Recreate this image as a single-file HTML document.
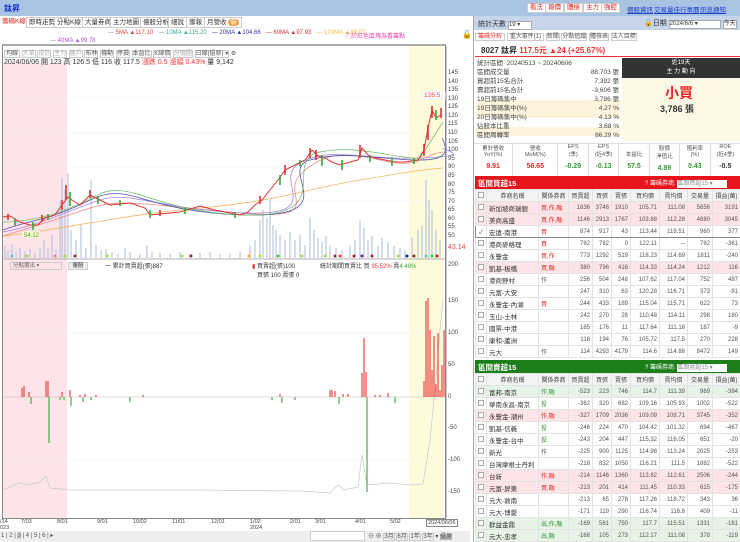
<!DOCTYPE html><html><head><meta charset="utf-8"><style>
*{margin:0;padding:0;box-sizing:border-box}
body{width:740px;height:542px;overflow:hidden;background:#fff;font-family:"Liberation Sans","Noto Sans CJK TC",sans-serif;font-size:7px;color:#333;position:relative}
.a{position:absolute;white-space:nowrap}
.top{left:0;top:0;width:740px;height:16px;background:#a9c3e3}
.btn{position:absolute;top:3px;height:10px;background:#fff;border:1px solid #ccc;color:#d22;font-size:6.5px;line-height:8px;padding:0 2px}
.lnk{position:absolute;top:4px;color:#1a3fc9;text-decoration:underline;font-size:6.5px}
.tab{position:absolute;top:17px;height:11px;border:1px solid #ccc;background:#fff;font-size:6.5px;line-height:9px;padding:0 2px;color:#333}
table{border-collapse:collapse;position:absolute;table-layout:fixed}
td{border:1px solid #e3e3e3;height:12px;font-size:6px;text-align:right;padding:0 2px;overflow:hidden;white-space:nowrap;color:#555}
td.n{text-align:left;font-size:6.5px;color:#333}
td.c{padding:0;text-align:center}
td.b{text-align:left;color:#d22}
tr.h td{background:#f3f3f3;text-align:center;color:#444}
tr.p td{background:#fde4e6}
tr.g td{background:#e6f3e6}
.ck{display:inline-block;width:6px;height:6px;border:1px solid #aaa;background:#fff}
.ax{position:absolute;left:448px;font-size:6px;color:#444}
</style></head><body>
<div class="a top"></div>
<div class="a" style="left:4px;top:3px;color:#1530d0;font-size:8px;font-weight:bold">鈦昇</div>
<div class="btn" style="left:527px">看法</div><div class="btn" style="left:545px">報價</div><div class="btn" style="left:564px">體檢</div><div class="btn" style="left:583px">主力</div><div class="btn" style="left:601px">強腔</div>
<div class="lnk" style="left:627px">個股資訊</div><div class="lnk" style="left:654px">交易量佳</div><div class="lnk" style="left:680px">行事曆</div><div class="lnk" style="left:700px">訊息通知</div>

<div class="tab" style="left:0;color:#d22;border:none;background:none">籌碼K線</div>
<div class="tab" style="left:26px">即時走勢</div><div class="tab" style="left:54px">分點K線</div><div class="tab" style="left:82px">大量券商</div><div class="tab" style="left:110px">主力地圖</div><div class="tab" style="left:140px">億股分析</div><div class="tab" style="left:168px">細說</div><div class="tab" style="left:186px">籌報</div><div class="tab" style="left:204px">月營收 <span style="background:#f0a040;color:#fff;border-radius:4px;padding:0 2px">新</span></div>

<div class="a" style="left:108px;top:30px;font-size:6px;color:#888">— <span style="color:#d44">5MA ▲117.10</span>&nbsp;&nbsp;&nbsp;— <span style="color:#3a9">10MA ▲115.20</span>&nbsp;&nbsp;&nbsp;<span style="color:#33a">— 20MA ▲104.66</span>&nbsp;&nbsp;&nbsp;<span style="color:#c33">— 60MA ▲97.93</span>&nbsp;&nbsp;&nbsp;<span style="color:#eb4">— 120MA ▲89.07</span></div>
<div class="a" style="left:50px;top:38px;font-size:6px;color:#888">— <span style="color:#a5c">40MA ▲99.78</span></div>
<div class="a" style="left:345px;top:31px;font-size:6px;color:#e4a">ⓘ於紅色區塊為看籌點</div>
<div class="a" style="left:462px;top:30px;font-size:8px">🔓</div>

<div class="a" style="left:2px;top:44px;width:444px;height:475px;border:1px solid #888;border-top:2px solid #aaa"></div>
<div class="a" style="left:3px;top:63px;width:64px;height:455px;background:#fde4e8"></div>
<div class="a" style="left:409px;top:46px;width:34px;height:472px;background:#fdfbdc"></div>
<div class="a" style="left:4px;top:48px;font-size:6px;color:#555">
<span style="border:1px solid #ccc;padding:0 1px">均線</span> <span style="border:1px solid #ccc;color:#aaa">大單</span> <span style="border:1px solid #ccc;color:#aaa">投信</span> <span style="border:1px solid #ccc;color:#aaa">主力</span> <span style="border:1px solid #ccc;color:#aaa">散戶</span> <span style="border:1px solid #ccc">布林</span> <span style="border:1px solid #ccc">機動</span> <span style="border:1px solid #ccc">停損</span> <span style="border:1px solid #ccc">本益比</span> <span style="border:1px solid #ccc">K線價</span> <span style="border:1px solid #ccc;color:#aaa">分價圖</span> <span style="border:1px solid #ccc">日線(還原) ▾</span> ⚙</div>
<div class="a" style="left:4px;top:57px;font-size:7px;color:#333">2024/06/06 開 123 高 126.5 低 116 收 117.5 <span style="color:#e33">漲跌 0.5 漲幅 0.43%</span> 量 9,142</div>

<svg class="a" style="left:0;top:0" width="470" height="542">
<g stroke="#f0f0f0" stroke-width="0.6"><line x1="3" y1="98" x2="445" y2="98"/><line x1="3" y1="133" x2="445" y2="133"/><line x1="3" y1="167" x2="445" y2="167"/><line x1="3" y1="201" x2="445" y2="201"/><line x1="3" y1="333" x2="445" y2="333"/><line x1="3" y1="460" x2="445" y2="460"/></g>
<path stroke="#b7c7de" stroke-width="1.2" fill="none" d="M5 246V258M8 250V258M12 244V258M16 252V258M20 248V258M25 251V258M30 249V258M35 253V258M40 247V258M44 240V258M48 248V258M52 235V258M56 250V258M60 200V258M62 178V258M65 190V258M68 173V258M71 230V258M76 240V258M81 225V258M86 248V258M91 180V258M96 245V258M101 250V258M106 249V258M112 252V258M118 254V258M125 248V258M130 252V258M140 254V258M147 245V258M152 252V258M160 253V258M170 254V258M180 252V258M190 254V258M200 253V258M210 252V258M220 254V258M230 253V258M240 252V258M250 245V258M255 240V258M260 220V258M263 210V258M267 218V258M270 200V258M273 225V258M276 230V258M280 235V258M285 240V258M290 232V258M295 240V258M300 235V258M305 245V258M310 218V258M314 230V258M318 238V258M322 242V258M326 236V258M330 245V258M336 248V258M342 250V258M350 245V258M355 240V258M360 220V258M364 228V258M368 240V258M372 236V258M378 246V258M382 238V258M388 242V258M394 246V258M400 248V258M405 250V258M412 238V258M418 230V258M422 225V258M426 180V258M429 200V258M432 210V258M436 230V258M440 240V258"/>
<path fill="none" stroke="#f0b860" stroke-width="0.8" d="M3 236 C60 230 120 215 200 208 S300 190 360 180 S420 170 443 168"/>
<path fill="none" stroke="#e88" stroke-width="0.8" d="M3 236 C40 225 60 218 90 208 S150 205 240 213 S280 195 300 175 S340 150 380 160 S420 155 443 152"/>
<path fill="none" stroke="#a8d" stroke-width="0.8" d="M3 232 C40 225 70 210 100 200 S160 210 245 213 S270 180 300 163 S360 160 420 158 S440 150 443 148"/>
<path fill="none" stroke="#55a" stroke-width="0.8" d="M3 230 C30 220 50 220 90 200 S140 212 245 215 S275 170 310 160 S380 160 420 160 S440 140 443 138"/>
<path fill="none" stroke="#6b6" stroke-width="0.7" d="M3 222 C30 222 60 215 95 196 S150 212 245 215 S280 160 320 152 S400 160 420 158 L443 122"/>
<path fill="none" stroke="#d33" stroke-width="1" d="M3 217 L10 216 L20 222 L30 225 L38 225 L45 218 L55 215 L62 205 L68 197 L72 200 L80 205 L90 195 L100 200 L110 205 L130 203 L145 208 L150 215 L160 214 L180 212 L200 206 L215 210 L240 215 L248 212 L255 205 L262 200 L270 190 L278 180 L285 170 L295 165 L305 160 L312 150 L318 156 L325 158 L332 162 L340 165 L350 162 L358 160 L362 148 L368 155 L375 158 L385 160 L395 162 L405 162 L418 160 L424 150 L428 128 L432 110 L436 118 L441 115"/>
<path stroke="#3a3" stroke-width="1.6" d="M15 218V226M33 222V230M48 214V220M70 192V206M98 196V204M120 200V206M150 210V218M185 208V214M235 212V218M280 175V185M300 160V166M322 155V166M342 160V170M370 155V162M392 158V166M414 158V164M436 110V120"/>
<path stroke="#d33" stroke-width="1.6" d="M8 214V220M42 215V222M62 200V210M66 185V200M90 190V198M160 210V216M260 196V204M285 165V175M310 148V158M316 150V160M360 145V158M424 144V156M428 125V140M432 106V118M441 108V118"/>
<rect x="22" y="231" width="18" height="7" fill="#fffbd0" stroke="#ddd" stroke-width="0.5"/><text x="24" y="237" font-size="6" fill="#3a3">54.12</text>
<rect x="422" y="91" width="24" height="8" fill="#fff" stroke="#ddd" stroke-width="0.5"/><text x="424" y="97" font-size="6.5" fill="#e44">126.5</text>
<g><circle cx="12" cy="256" r="1.5" fill="#5cc"/><circle cx="27" cy="256" r="1.5" fill="#ad4"/><circle cx="55" cy="256" r="1.5" fill="#e88"/><circle cx="65" cy="256" r="1.5" fill="#ad4"/><circle cx="75" cy="256" r="1.5" fill="#a22"/><circle cx="107" cy="256" r="1.5" fill="#ad4"/><circle cx="182" cy="256" r="1.5" fill="#ad4"/><circle cx="191" cy="256" r="1.5" fill="#a22"/><circle cx="249" cy="256" r="1.5" fill="#fa3"/><circle cx="260" cy="256" r="1.5" fill="#ad4"/><circle cx="278" cy="256" r="1.5" fill="#4c4"/><circle cx="302" cy="256" r="1.5" fill="#ad4"/><circle cx="325" cy="256" r="1.5" fill="#ad4"/><circle cx="335" cy="256" r="1.5" fill="#a22"/><circle cx="340" cy="256" r="1.5" fill="#e44"/><circle cx="354" cy="256" r="1.5" fill="#a22"/><circle cx="362" cy="256" r="1.5" fill="#729"/><circle cx="372" cy="256" r="1.5" fill="#a22"/><circle cx="398" cy="256" r="1.5" fill="#ad4"/><circle cx="407" cy="256" r="1.5" fill="#229"/><circle cx="414" cy="256" r="1.5" fill="#a22"/><circle cx="426" cy="256" r="1.5" fill="#5cc"/><circle cx="432" cy="256" r="1.5" fill="#4c4"/><circle cx="437" cy="256" r="1.5" fill="#a22"/></g>
<line x1="3" y1="259" x2="445" y2="259" stroke="#999" stroke-width="0.8"/>
<line x1="3" y1="397" x2="445" y2="397" stroke="#bbb" stroke-width="0.6"/>
<path fill="none" stroke="#ccc" stroke-width="0.8" d="M3 490 L20 483 L28 485 L40 482 L46 476 L50 488 L70 490 L120 490 L200 490 L300 491 L330 493 L338 485 L344 490 L358 487 L362 455 L367 485 L390 483 L410 485 L423 484 L430 440 L436 380 L440 330 L443 300"/>
<path stroke="#e33" stroke-width="1.1" d="M22 397V388M24 397V386M29 397V392M46 397V381M48 397V381M62 397V392M70 397V390M80 397V395M85 397V394M96 397V395M143 397V395M280 397V394M330 397V390M332 397V390M335 397V391M343 397V394M348 397V394M362 397V373M364 397V338M366 397V372M375 397V395M380 397V395M388 397V393M424 397V381M426 397V301M428 397V298M430 397V330M432 397V370M434 397V336M436 397V384M438 397V333M440 397V390M442 397V365M444 397V330"/>
<path stroke="#3a3" stroke-width="1.1" d="M31 397V404M49 397V443M60 397V400M64 397V400M71 397V406M83 397V402M91 397V400M130 397V402M272 397V400M282 397V403M295 397V400M339 397V404M367 397V492M395 397V403"/>
<line x1="446" y1="46" x2="446" y2="518" stroke="#888"/>
</svg>
<div class="a" style="left:10px;top:262px;width:52px;height:8px;border:1px solid #ccc;font-size:5.5px;color:#666;padding-left:2px;line-height:6px">分點選出 ▾</div>
<div class="a" style="left:68px;top:262px;width:20px;height:8px;border:1px solid #ccc;background:#eee;font-size:5.5px;text-align:center;line-height:6px">複股</div>
<div class="a" style="left:105px;top:261px;font-size:6px">一 累計買賣超(張)887</div>
<div class="a" style="left:252px;top:261px;font-size:6px"><span style="color:#d33">▮</span> 買賣超(張)100<br>&nbsp;&nbsp; 買張 100 賣張 0</div>
<div class="a" style="left:320px;top:261px;font-size:6px">統計期間買賣比 買 <span style="color:#e33">95.52%</span> 賣<span style="color:#3a3">4.48%</span></div>

<div class="ax" style="top:69px;line-height:8.58px">145<br>140<br>135<br>130<br>125<br>120<br>115<br>110<br>105<br>100<br>95<br>90<br>85<br>80<br>75<br>70<br>65<br>60<br>55<br>50</div>
<div class="ax" style="top:244px;color:#d44;font-size:7px">43.14</div>
<div class="ax" style="top:262px">200</div><div class="ax" style="top:298px">150</div><div class="ax" style="top:330px">100</div><div class="ax" style="top:362px">50</div><div class="ax" style="top:394px">0</div><div class="ax" style="top:425px">-50</div><div class="ax" style="top:457px">-100</div><div class="ax" style="top:489px">-150</div>

<div class="a" style="left:0;top:519px;font-size:5.5px;color:#444;width:470px;height:12px">
<span class="a" style="left:0">/14<br>023</span><span class="a" style="left:21px">7/03</span><span class="a" style="left:57px">8/01</span><span class="a" style="left:97px">9/01</span><span class="a" style="left:133px">10/02</span><span class="a" style="left:172px">11/01</span><span class="a" style="left:211px">12/01</span><span class="a" style="left:250px">1/02<br>2024</span><span class="a" style="left:290px">2/01</span><span class="a" style="left:315px">3/01</span><span class="a" style="left:355px">4/01</span><span class="a" style="left:390px">5/02</span>
<span class="a" style="left:426px;border:1px solid #888;padding:0 1px">2024/06/06</span></div>
<div class="a" style="left:0;top:531px;width:470px;height:11px;background:#eee"></div>
<div class="a" style="left:1px;top:532px;font-size:6px;color:#555">1 | 2 | <span style="background:#ccc">3</span> | 4 | 5 | 6 | ▸</div>
<div class="a" style="left:310px;top:531px;width:55px;height:10px;background:#fff;border:1px solid #ccc"></div>
<div class="a" style="left:368px;top:531px;font-size:6px;color:#555">⊖ ⊕ <span style="border:1px solid #ccc">3月</span> <span style="border:1px solid #ccc">6月</span> <span style="border:1px solid #ccc">1年</span> <span style="border:1px solid #ccc">3年</span> ▾ <span style="background:#bbb">還原</span></div>

<div class="a" style="left:473px;top:16px;width:1px;height:526px;background:#aaa"></div>
<div class="a" style="left:474px;top:16px;width:266px;height:14px;background:#c6d5ea"></div>
<div class="a" style="left:478px;top:19px;font-size:7px">統計天數 <span style="display:inline-block;width:24px;height:9px;background:#fff;border:1px solid #aaa;font-size:6px;line-height:7px">19 ▾</span></div>
<div class="a" style="left:644px;top:18px;font-size:7px">🔓日期 <span style="display:inline-block;width:52px;height:9px;background:#fff;border:1px solid #aaa;font-size:6px;line-height:7px">2024/6/6 ▾</span> <span style="display:inline-block;width:14px;height:9px;background:#fff;border:1px solid #aaa;font-size:6px;line-height:7px">今天</span></div>
<div class="a" style="left:475px;top:31px;font-size:6px;color:#555;height:11px">
<span style="border:1px solid #ccc;color:#e33;padding:0 2px">籌碼分析</span> <span style="border:1px solid #ccc;padding:0 2px">重大事件(1)</span> <span style="border:1px solid #ccc">新聞</span> <span style="border:1px solid #ccc">分點追蹤</span> <span style="border:1px solid #ccc">體檢表</span> <span style="border:1px solid #ccc">法人目標</span></div>
<div class="a" style="left:475px;top:43px;width:265px;height:14px;border-bottom:1.5px solid #e33;font-size:8px;font-weight:bold;padding:2px 6px">8027 鈦昇 <span style="color:#e33">117.5元 ▲24 (+25.67%)</span></div>
<div class="a" style="left:622px;top:58px;width:118px;height:20px;background:#333;color:#fff;font-size:6px;text-align:center;line-height:9px;padding-top:1px">近19天<br>主 力 動 向</div>
<div class="a" style="left:622px;top:78px;width:118px;height:63px;background:#fdf8e6"></div>
<div class="a" style="left:665px;top:83px;color:#e22;font-size:14px;font-weight:bold">小買</div>
<div class="a" style="left:660px;top:102px;font-size:9px;font-weight:bold;color:#333">3,786 張</div>
<div class="a" style="left:476px;top:100px;width:145px;height:9px;background:#fdf3dc"></div>
<div class="a" style="left:476px;top:109px;width:145px;height:9px;background:#fdf3dc"></div>
<div class="a" style="left:476px;top:127px;width:145px;height:9px;background:#fdf3dc"></div>
<div class="a" style="left:477px;top:59px;font-size:6.5px;line-height:9px;color:#444">統計區間&nbsp; 20240513 ~ 20240606<br>區間成交量<br>買超前15名合計<br>賣超前15名合計<br>19日籌碼集中<br>19日籌碼集中(%)<br>20日籌碼集中(%)<br>佔股本比重<br>區間周轉率</div>
<div class="a" style="left:575px;top:68px;font-size:6.5px;line-height:9px;color:#444;text-align:right;width:44px">88,703 張<br>7,392 張<br>-3,606 張<br>3,786 張<br>4.27 %<br>4.13 %<br>3.68 %<br>86.29 %</div>
<div class="a" style="left:474px;top:143px;width:266px;height:33px;border-top:1px solid #ddd;display:flex;font-size:5.5px;color:#555;text-align:center">
<div style="flex:1.3;border-right:1px solid #ddd">累計營收<br>YoY(%)<div style="color:#e22;font-size:7px;font-weight:bold;margin-top:5px">9.91</div></div>
<div style="flex:1.5;border-right:1px solid #ddd">營收<br>MoM(%)<div style="color:#e22;font-size:7px;font-weight:bold;margin-top:5px">56.65</div></div>
<div style="flex:1;border-right:1px solid #ddd">EPS<br>(季)<div style="color:#393;font-size:7px;font-weight:bold;margin-top:5px">-0.29</div></div>
<div style="flex:1;border-right:1px solid #ddd">EPS<br>(近4季)<div style="color:#393;font-size:7px;font-weight:bold;margin-top:5px">-0.13</div></div>
<div style="flex:1;border-right:1px solid #ddd"><br>本益比<div style="color:#393;font-size:7px;font-weight:bold;margin-top:5px">57.5</div></div>
<div style="flex:1;border-right:1px solid #ddd">股價<br>淨值比<div style="color:#393;font-size:7px;font-weight:bold;margin-top:5px">4.89</div></div>
<div style="flex:1;border-right:1px solid #ddd">殖利率<br>(%)<div style="color:#393;font-size:7px;font-weight:bold;margin-top:5px">0.43</div></div>
<div style="flex:1">ROE<br>(近4季)<div style="color:#333;font-size:7px;font-weight:bold;margin-top:5px">-0.5</div></div></div>

<div class="a" style="left:475px;top:176px;width:265px;height:13px;background:#e8141c;color:#fff;font-size:7.5px;font-weight:bold;padding:2px 3px">區間買超15<span style="position:absolute;left:170px;font-size:6px;font-weight:normal">? 籌碼券商: <span style="display:inline-block;width:50px;background:#fff;color:#888;height:8px;line-height:8px">區間買超15 ▾</span></span></div>
<table style="left:475px;top:189px;width:265px">
<colgroup><col style="width:11px"><col style="width:52px"><col style="width:30px"><col style="width:24px"><col style="width:19px"><col style="width:19px"><col style="width:29px"><col style="width:28px"><col style="width:25px"><col style="width:28px"></colgroup>
<tr class="h"><td class="c"><span class="ck"></span></td><td>券商名稱</td><td>關係券商</td><td>買賣超</td><td>買張</td><td>賣張</td><td>買均價</td><td>賣均價</td><td>交易量</td><td>損益(萬)</td></tr>
<tr class="p"><td class="c"><span class="ck"></span></td><td class="n">新加坡商瑞銀</td><td class="b">買,作,融</td><td>1836</td><td>3746</td><td>1910</td><td>105.71</td><td>111.08</td><td>5656</td><td>3191</td></tr>
<tr class="p"><td class="c"><span class="ck"></span></td><td class="n">美商高盛</td><td class="b">買,作,融</td><td>1146</td><td>2913</td><td>1767</td><td>103.88</td><td>112.28</td><td>4680</td><td>3045</td></tr>
<tr><td class="c" style="border-left:1px solid #888;border-top:1px solid #888;border-bottom:1px solid #888">✓</td><td class="n" style="border-top:1px solid #888;border-bottom:1px solid #888">宏遠-南港</td><td class="b" style="border-top:1px solid #888;border-bottom:1px solid #888">買</td><td style="border-top:1px solid #888;border-bottom:1px solid #888">874</td><td style="border-top:1px solid #888;border-bottom:1px solid #888">917</td><td style="border-top:1px solid #888;border-bottom:1px solid #888">43</td><td style="border-top:1px solid #888;border-bottom:1px solid #888">113.44</td><td style="border-top:1px solid #888;border-bottom:1px solid #888">118.51</td><td style="border-top:1px solid #888;border-bottom:1px solid #888">960</td><td style="border-top:1px solid #888;border-bottom:1px solid #888">377</td></tr>
<tr><td class="c"><span class="ck"></span></td><td class="n">港商麥格理</td><td class="b">買</td><td>782</td><td>782</td><td>0</td><td>122.11</td><td>--</td><td>782</td><td>-361</td></tr>
<tr><td class="c"><span class="ck"></span></td><td class="n">永豐金</td><td class="b">買,作</td><td>773</td><td>1292</td><td>519</td><td>118.23</td><td>114.69</td><td>1811</td><td>-240</td></tr>
<tr class="p"><td class="c"><span class="ck"></span></td><td class="n">凱基-板橋</td><td class="b">買,融</td><td>380</td><td>796</td><td>416</td><td>114.33</td><td>114.24</td><td>1212</td><td>116</td></tr>
<tr><td class="c"><span class="ck"></span></td><td class="n">港商野村</td><td class="b" style="color:#555">作</td><td>256</td><td>504</td><td>248</td><td>107.62</td><td>117.04</td><td>752</td><td>487</td></tr>
<tr><td class="c"><span class="ck"></span></td><td class="n">元富-大安</td><td></td><td>247</td><td>310</td><td>63</td><td>120.28</td><td>116.71</td><td>373</td><td>-91</td></tr>
<tr><td class="c"><span class="ck"></span></td><td class="n">永豐金-內湖</td><td class="b">買</td><td>244</td><td>433</td><td>189</td><td>115.04</td><td>115.71</td><td>622</td><td>73</td></tr>
<tr><td class="c"><span class="ck"></span></td><td class="n">玉山-士林</td><td></td><td>242</td><td>270</td><td>28</td><td>110.48</td><td>114.11</td><td>298</td><td>180</td></tr>
<tr><td class="c"><span class="ck"></span></td><td class="n">國票-中港</td><td></td><td>165</td><td>176</td><td>11</td><td>117.64</td><td>111.18</td><td>187</td><td>-9</td></tr>
<tr><td class="c"><span class="ck"></span></td><td class="n">康和-蘆洲</td><td></td><td>118</td><td>194</td><td>76</td><td>105.72</td><td>117.5</td><td>270</td><td>228</td></tr>
<tr><td class="c"><span class="ck"></span></td><td class="n">元大</td><td class="b" style="color:#555">作</td><td>114</td><td>4293</td><td>4179</td><td>114.6</td><td>114.88</td><td>8472</td><td>149</td></tr>
</table>

<div class="a" style="left:475px;top:360px;width:265px;height:13px;background:#1c7f1c;color:#fff;font-size:7.5px;font-weight:bold;padding:2px 3px">區間賣超15<span style="position:absolute;left:170px;font-size:6px;font-weight:normal">? 籌碼券商: <span style="display:inline-block;width:50px;background:#fff;color:#888;height:8px;line-height:8px">區間賣超15 ▾</span></span></div>
<table style="left:475px;top:373px;width:265px">
<colgroup><col style="width:11px"><col style="width:52px"><col style="width:30px"><col style="width:24px"><col style="width:19px"><col style="width:19px"><col style="width:29px"><col style="width:28px"><col style="width:25px"><col style="width:28px"></colgroup>
<tr class="h"><td class="c"><span class="ck"></span></td><td>券商名稱</td><td>關係券商</td><td>買賣超</td><td>買張</td><td>賣張</td><td>買均價</td><td>賣均價</td><td>交易量</td><td>損益(萬)</td></tr>
<tr class="g"><td class="c"><span class="ck"></span></td><td class="n">富邦-南京</td><td class="b" style="color:#393">作,融</td><td>-523</td><td>223</td><td>746</td><td>114.7</td><td>111.39</td><td>969</td><td>-394</td></tr>
<tr><td class="c"><span class="ck"></span></td><td class="n">華南永昌-南京</td><td class="b" style="color:#393">投</td><td>-362</td><td>320</td><td>682</td><td>109.16</td><td>105.93</td><td>1002</td><td>-522</td></tr>
<tr class="p"><td class="c"><span class="ck"></span></td><td class="n">永豐金-潮州</td><td class="b">作,融</td><td>-327</td><td>1709</td><td>2036</td><td>109.09</td><td>108.71</td><td>3745</td><td>-352</td></tr>
<tr><td class="c"><span class="ck"></span></td><td class="n">凱基-信義</td><td class="b" style="color:#393">投</td><td>-246</td><td>224</td><td>470</td><td>104.42</td><td>101.32</td><td>694</td><td>-467</td></tr>
<tr><td class="c"><span class="ck"></span></td><td class="n">永豐金-台中</td><td class="b" style="color:#393">投</td><td>-243</td><td>204</td><td>447</td><td>115.32</td><td>116.05</td><td>651</td><td>-20</td></tr>
<tr><td class="c"><span class="ck"></span></td><td class="n">新光</td><td class="b" style="color:#555">作</td><td>-225</td><td>900</td><td>1125</td><td>114.98</td><td>113.24</td><td>2025</td><td>-253</td></tr>
<tr><td class="c"><span class="ck"></span></td><td class="n">台灣摩根士丹利</td><td></td><td>-218</td><td>832</td><td>1050</td><td>116.21</td><td>111.5</td><td>1882</td><td>-522</td></tr>
<tr class="p"><td class="c"><span class="ck"></span></td><td class="n">台新</td><td class="b">作,融</td><td>-214</td><td>1146</td><td>1360</td><td>113.82</td><td>112.61</td><td>2506</td><td>-244</td></tr>
<tr class="p"><td class="c"><span class="ck"></span></td><td class="n">元富-屏東</td><td class="b">買,融</td><td>-213</td><td>201</td><td>414</td><td>111.45</td><td>110.33</td><td>615</td><td>-175</td></tr>
<tr><td class="c"><span class="ck"></span></td><td class="n">元大-敦南</td><td></td><td>-213</td><td>65</td><td>278</td><td>117.26</td><td>118.72</td><td>343</td><td>36</td></tr>
<tr><td class="c"><span class="ck"></span></td><td class="n">元大-博愛</td><td></td><td>-171</td><td>119</td><td>290</td><td>116.74</td><td>116.8</td><td>409</td><td>-11</td></tr>
<tr class="g"><td class="c"><span class="ck"></span></td><td class="n">群益金鼎</td><td class="b" style="color:#393">出,作,融</td><td>-169</td><td>581</td><td>750</td><td>117.7</td><td>115.51</td><td>1331</td><td>-161</td></tr>
<tr class="g"><td class="c"><span class="ck"></span></td><td class="n">元大-忠孝</td><td class="b" style="color:#393">出,融</td><td>-168</td><td>105</td><td>273</td><td>112.17</td><td>111.08</td><td>378</td><td>-119</td></tr>
</table>
</body></html>
